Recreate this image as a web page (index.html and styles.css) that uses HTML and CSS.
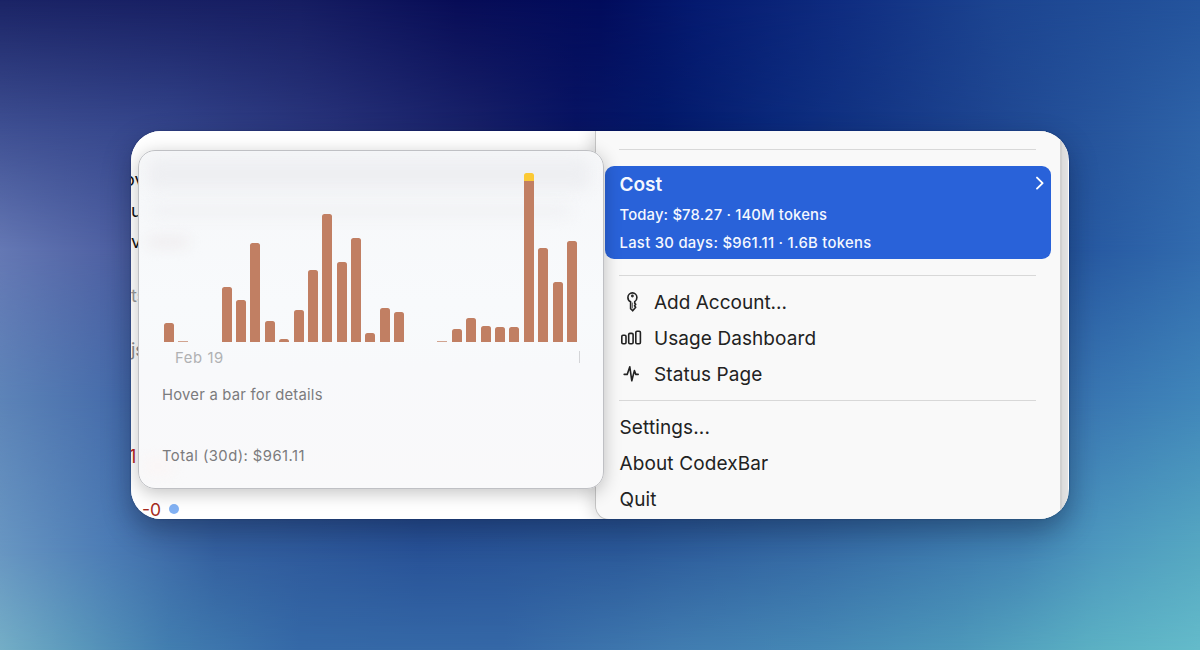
FILE: index.html
```
<!DOCTYPE html>
<html lang="en">
<head>
<meta charset="utf-8">
<meta name="viewport" content="width=device-width, initial-scale=1.0">
<title>CodexBar</title>
<link rel="stylesheet" href="styles.css">
</head>
<body>

<div class="wallpaper">
    <div class="wash w1"></div>
    <div class="wash w2"></div>
    <div class="wash w3"></div>
    <div class="wash w4"></div>
    <div class="wash w5"></div>
</div>

<div class="frame">
<div class="window">
    <div class="editor">
        <span class="code line1">ov</span>
        <span class="code line2">u</span>
        <span class="code line3">v</span>
        <span class="code line4">ts</span>
        <span class="code line5">js</span>
        <span class="code line6">1</span>
        <span class="code line7">-0</span>
        <span class="dot"></span>
    </div>

    <div class="menu">
        <hr>
        <div class="cost">
            <div class="cost-title">
                <span>Cost</span>
                <svg width="10" height="14" viewBox="0 0 10 14"><path d="M2 1.6 L7.6 7.1 L2 12.6"/></svg>
            </div>
            <p class="today">Today: $78.27 · 140M tokens</p>
            <p class="last30">Last 30 days: $961.11 · 1.6B tokens</p>
        </div>
        <hr>
        <ul class="actions">
            <li>
                <svg width="24" height="24" viewBox="0 0 24 24">
                    <path d="M11.6 11.8 C9.8 10.9 8.9 9.3 8.9 7.4 A4.5 4.5 0 0 1 17.9 7.4 C17.9 9.3 17.1 10.8 15.7 11.7 V13.3 L16.7 14.4 L15.5 15.7 L16.7 17.2 L13.7 20.8 L11.6 18.7 Z"/>
                    <circle cx="13.4" cy="6" r="0.6"/>
                    <path d="M13.4 13 V18" class="thin"/>
                </svg>
                <span>Add Account...</span>
            </li>
            <li>
                <svg width="24" height="24" viewBox="0 0 24 24">
                    <rect x="2.8" y="9.2" width="4.2" height="8.6" rx="1.2"/>
                    <rect x="9.7" y="7.4" width="4.4" height="10.4" rx="1.2"/>
                    <rect x="16.8" y="5.2" width="4.6" height="12.6" rx="1.2"/>
                </svg>
                <span class="usage">Usage Dashboard</span>
            </li>
            <li>
                <svg width="24" height="24" viewBox="0 0 24 24">
                    <path d="M5.2 12.4 H8.2 L10.8 4.8 L12.8 18.8 L15.4 8.6 L16.8 12.4 H19.2"/>
                </svg>
                <span class="status">Status Page</span>
            </li>
        </ul>
        <hr>
        <ul class="links">
            <li>Settings...</li>
            <li>About CodexBar</li>
            <li>Quit</li>
        </ul>
    </div>

    <div class="panel">
        <div class="smudge s1"></div>
        <div class="smudge s2"></div>
        <div class="smudge s3"></div>
        <div class="smudge s4"></div>
        <div class="chart">
            <div class="bar" style="height: 19.5px"></div>
            <div class="bar tiny"></div>
            <div class="bar" style="height: 0"></div>
            <div class="bar" style="height: 0"></div>
            <div class="bar" style="height: 55px"></div>
            <div class="bar" style="height: 42px"></div>
            <div class="bar" style="height: 99px"></div>
            <div class="bar" style="height: 21px"></div>
            <div class="bar" style="height: 3px"></div>
            <div class="bar" style="height: 32px"></div>
            <div class="bar" style="height: 72px"></div>
            <div class="bar" style="height: 128px"></div>
            <div class="bar" style="height: 80px"></div>
            <div class="bar" style="height: 104px"></div>
            <div class="bar" style="height: 9.5px"></div>
            <div class="bar" style="height: 34.5px"></div>
            <div class="bar" style="height: 30px"></div>
            <div class="bar" style="height: 0"></div>
            <div class="bar" style="height: 0"></div>
            <div class="bar tiny"></div>
            <div class="bar" style="height: 13px"></div>
            <div class="bar" style="height: 24.5px"></div>
            <div class="bar" style="height: 16px"></div>
            <div class="bar" style="height: 15px"></div>
            <div class="bar" style="height: 15.5px"></div>
            <div class="bar peak" style="height: 169.5px"></div>
            <div class="bar" style="height: 94.5px"></div>
            <div class="bar" style="height: 60.5px"></div>
            <div class="bar" style="height: 101px"></div>
        </div>
        <div class="axis">
            <span>Feb 19</span>
            <i class="tick"></i>
        </div>
        <p class="hint">Hover a bar for details</p>
        <p class="total">Total (30d): $961.11</p>
    </div>
</div>
</div>

</body>
</html>
```
FILE: styles.css
```
* {
    box-sizing: border-box;
}
body {
    margin: 0;
    height: 650px;
    overflow: hidden;
    padding: 131px 0 0 131px;
    font-family: Inter, "Liberation Sans", sans-serif;
}
p, ul {
    margin: 0;
    padding: 0;
    list-style: none;
}

/* wallpaper: each wash fades in below the one before it */
.wallpaper, .wash {
    position: absolute;
    left: 0;
    top: 0;
    width: 1200px;
    height: 650px;
}
.wallpaper {
    z-index: -1;
    background: linear-gradient(90deg, #1b2466 0%, #161d62 25%, #080d57 38%, #020c5c 50%, #051a70 58%, #0f2c80 70%, #1c4490 83%, #24549d 100%);
}
.w1 {
    background: linear-gradient(90deg, #3f5093 0%, #34458b 14%, #273279 28%, #172068 40%, #081463 48%, #03196a 55%, #0b2a7c 65%, #1e4590 82%, #2e63a8 100%);
    -webkit-mask-image: linear-gradient(180deg, transparent 0, #000 130px);
    mask-image: linear-gradient(180deg, transparent 0, #000 130px);
}
.w2 {
    background: linear-gradient(90deg, #6578b4 0%, #4a5c9f 11%, #2a3d85 40%, #17428f 70%, #25569f 89%, #326bae 100%);
    -webkit-mask-image: linear-gradient(180deg, transparent 130px, #000 250px);
    mask-image: linear-gradient(180deg, transparent 130px, #000 250px);
}
.w3 {
    background: linear-gradient(90deg, #5d84b8 0%, #4268a8 11%, #244890 40%, #2b5f9f 70%, #3873b0 89%, #4086ba 100%);
    -webkit-mask-image: linear-gradient(180deg, transparent 250px, #000 400px);
    mask-image: linear-gradient(180deg, transparent 250px, #000 400px);
}
.w4 {
    background: linear-gradient(90deg, #6896c2 0%, #4c7cb5 9%, #34609f 18%, #285297 35%, #2b5999 52%, #366ba5 68%, #4284b4 85%, #4e9abf 92%, #56a8c2 100%);
    -webkit-mask-image: linear-gradient(180deg, transparent 400px, #000 550px);
    mask-image: linear-gradient(180deg, transparent 400px, #000 550px);
}
.w5 {
    background: linear-gradient(90deg, #74aec6 0%, #5c9abc 6%, #427eb0 14%, #3569a7 25%, #3568a7 42%, #417cb0 56%, #4588b5 68%, #4d98ba 80%, #5bb0c3 91%, #64bbca 100%);
    -webkit-mask-image: linear-gradient(180deg, transparent 550px, #000 650px);
    mask-image: linear-gradient(180deg, transparent 550px, #000 650px);
}

.frame {
    width: 938px;
    border-radius: 30px;
    box-shadow: 0 12px 28px rgba(10,20,50,0.4), 0 0 2px rgba(5,15,50,0.4);
}
.window {
    position: relative;
    display: flex;
    width: 938px;
    height: 388px;
    border-radius: 30px;
    overflow: hidden;
    background: #fff;
}

/* editor behind the menus */
.editor {
    position: relative;
    flex: 0 0 464px;
    background: #fff;
}
.code {
    position: absolute;
    font-size: 18px;
    line-height: 22px;
    color: #111;
}
.line1 { left: -7px; top: 38px; }
.line2 { left: 0; top: 69px; }
.line3 { left: 0; top: 100px; }
.line4 { left: 0; top: 154px; color: #999; }
.line5 { left: 0; top: 208px; color: #888; }
.line6 { left: -2px; top: 315px; color: #b3261e; }
.line7 { left: 11px; top: 368px; font-size: 17.5px; color: #a52a20; }
.dot {
    position: absolute;
    left: 38px;
    top: 373px;
    width: 10px;
    height: 10px;
    border-radius: 50%;
    background: #82b1f3;
}

/* main menu */
.menu {
    position: relative;
    flex: none;
    width: 467px;
    height: 389px;
    padding: 18px 9px 0 9px;
    border: 1px solid #c4c4c4;
    border-top: 0;
    border-right: 2px solid #d0d0d0;
    border-bottom-left-radius: 14px;
    background: #f9f9f9;
    box-shadow: -3px 0 16px rgba(0,0,0,0.16), 6px 0 0 #e7e7e7;
    color: #222;
}
.menu hr {
    height: 1px;
    margin: 0 15px 0 14px;
    border: 0;
    background: #d8d8d8;
}
.cost {
    height: 93px;
    margin: 16px 0;
    padding: 8px 6px 0 14.5px;
    border-radius: 9px;
    background: #2962d9;
    color: #f5f8ff;
}
.cost-title {
    display: flex;
    justify-content: space-between;
    height: 22px;
    font-size: 19px;
    font-weight: 600;
    line-height: 22px;
}
.cost svg {
    margin-top: 2px;
    fill: none;
    stroke: #fff;
    stroke-width: 1.9;
    stroke-linecap: round;
    stroke-linejoin: round;
}
.cost p {
    font-size: 14.8px;
    font-weight: 500;
    line-height: 20px;
}
.today {
    margin-top: 9px;
    letter-spacing: 0.17px;
}
.last30 {
    margin-top: 8px;
    letter-spacing: 0.3px;
}
.actions {
    padding: 8px 0 8px 14px;
}
.actions li {
    display: flex;
    align-items: center;
    height: 36px;
    gap: 11px;
    font-size: 19px;
}
.actions svg {
    fill: none;
    stroke: #222;
    stroke-width: 1.6;
    stroke-linejoin: round;
    stroke-linecap: round;
}
.actions .thin {
    stroke-width: 0.7;
}
.usage, .status {
    letter-spacing: 0.08px;
}
.links {
    padding: 9px 0 0 14.5px;
    font-size: 19px;
    line-height: 36px;
    letter-spacing: 0.12px;
}

/* cost history popover */
.panel {
    position: absolute;
    left: 7px;
    top: 19px;
    width: 465.5px;
    height: 339px;
    padding: 21.5px 24px 0 25px;
    border: 1px solid #bfc0c4;
    border-radius: 17px;
    overflow: hidden;
    background: linear-gradient(180deg, #f6f7f9 0%, #f8fafc 45%, #f8f9fb 65%, #f9f9fa 100%);
    box-shadow: 0 4px 18px rgba(0,0,0,0.24);
}
.smudge {
    position: absolute;
    border-radius: 10px;
    background: #eeeff2;
    filter: blur(7px);
}
.s1 { left: 8px; top: 7px; width: 444px; height: 32px; }
.s2 { left: 12px; top: 54px; width: 420px; height: 12px; background: #f0f1f4; }
.s3 { left: 8px; top: 86px; width: 42px; height: 10px; background: #eeebed; }
.s4 { left: 4px; top: 308px; width: 30px; height: 14px; background: #fbf5f5; }
.chart {
    position: relative;
    display: flex;
    align-items: flex-end;
    justify-content: space-between;
    width: 413px;
    height: 169.5px;
}
.bar {
    width: 10px;
    border-radius: 2.5px 2.5px 0 0;
    background: #c17f63;
}
.tiny {
    height: 1px;
    border-radius: 0;
    opacity: 0.7;
}
.peak {
    background: linear-gradient(180deg, #fbc934 8px, #c17f63 8px);
}
.axis {
    display: flex;
    justify-content: space-between;
    padding: 7px 0 0 11px;
    width: 415.5px;
    height: 27px;
    font-size: 14.8px;
    line-height: 18px;
    letter-spacing: 0.6px;
    color: #b0b1b3;
}
.tick {
    width: 1px;
    height: 12px;
    margin-top: 2px;
    background: #d4d5d8;
}
.hint, .total {
    position: relative;
    margin-left: -2px;
    font-size: 14.8px;
    line-height: 20px;
    color: #7b7b7d;
}
.hint {
    margin-top: 16px;
    letter-spacing: 0.24px;
}
.total {
    margin-top: 41px;
    letter-spacing: 0.45px;
}
```
